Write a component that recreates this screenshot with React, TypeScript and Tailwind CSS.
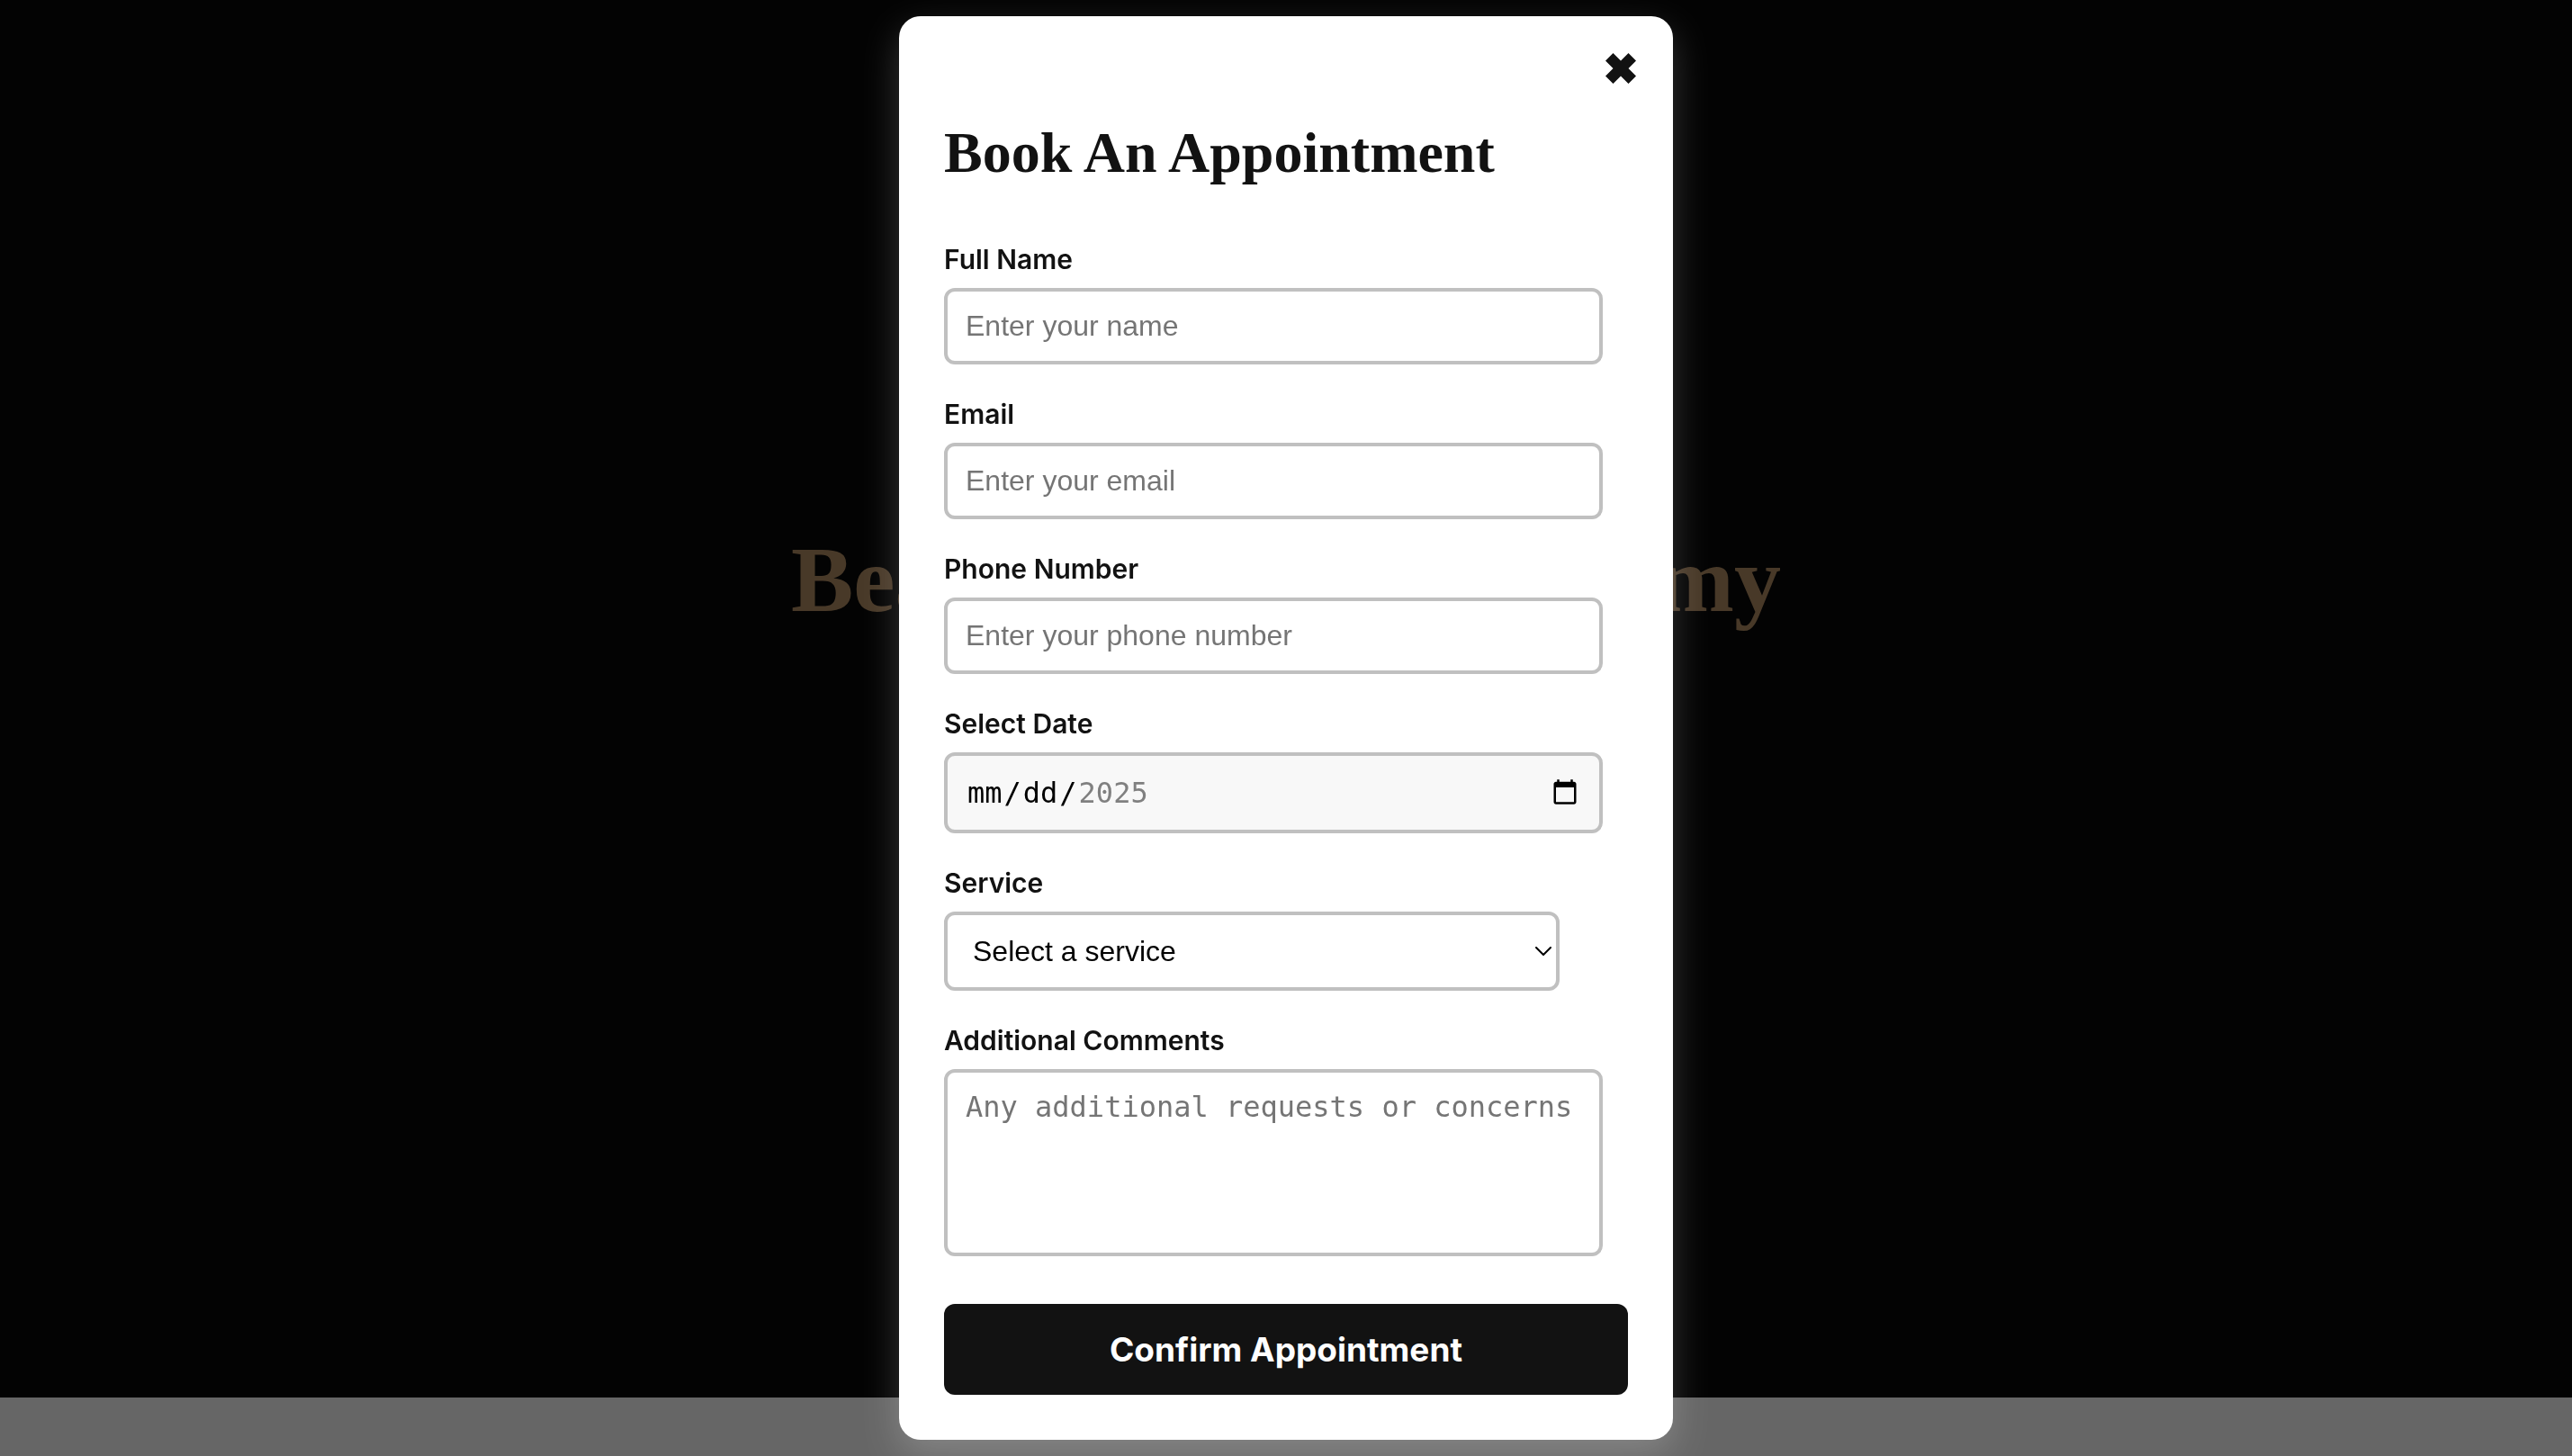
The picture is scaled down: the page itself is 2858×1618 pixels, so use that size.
import { useId, type ReactNode } from "react";

const control =
  "w-full max-w-[732px] rounded-[12px] border-4 border-[#c0c0c0] px-5 text-[32px] leading-[37px] outline-none placeholder:text-[#757575]";

function Field({ label, children }: { label: string; children: (id: string) => ReactNode }) {
  const id = useId();
  return (
    <div className="flex flex-col gap-3">
      <label
        htmlFor={id}
        className="font-['Inter',sans-serif] text-[30px] leading-[40px] font-semibold text-[#121212]"
      >
        {label}
      </label>
      {children(id)}
    </div>
  );
}

function BookingForm() {
  return (
    <form className="flex flex-col gap-[35px]" onSubmit={(event) => event.preventDefault()}>
      <Field label="Full Name">
        {(id) => (
          <input
            id={id}
            type="text"
            placeholder="Enter your name"
            className={`${control} bg-white py-5 font-['Liberation_Sans',sans-serif]`}
          />
        )}
      </Field>
      <Field label="Email">
        {(id) => (
          <input
            id={id}
            type="email"
            placeholder="Enter your email"
            className={`${control} bg-white py-5 font-['Liberation_Sans',sans-serif]`}
          />
        )}
      </Field>
      <Field label="Phone Number">
        {(id) => (
          <input
            id={id}
            type="tel"
            placeholder="Enter your phone number"
            className={`${control} bg-white py-5 font-['Liberation_Sans',sans-serif]`}
          />
        )}
      </Field>
      <Field label="Select Date">
        {(id) => (
          <input
            id={id}
            type="date"
            min="2025-01-01"
            max="2025-12-31"
            className={`${control} h-[90px] bg-[#f8f8f8] font-['DejaVu_Sans_Mono',monospace] text-black [&::-webkit-datetime-edit-day-field]:px-[2px] [&::-webkit-datetime-edit-month-field]:px-[2px] [&::-webkit-datetime-edit-year-field]:px-[2px]`}
          />
        )}
      </Field>
      <Field label="Service">
        {(id) => (
          <div className="relative w-full max-w-[684px]">
            <select
              id={id}
              defaultValue=""
              className={`${control} h-[88px] appearance-none bg-white pl-7 font-['Liberation_Sans',sans-serif] text-black`}
            >
              <option value="">Select a service</option>
            </select>
            <svg
              aria-hidden="true"
              viewBox="0 0 18 10"
              className="pointer-events-none absolute top-1/2 right-[9px] h-[10px] w-[18px] -translate-y-1/2"
              fill="none"
              stroke="#000"
              strokeWidth="2"
              strokeLinejoin="round"
              strokeLinecap="round"
            >
              <path d="M1 1l8 8 8-8" />
            </svg>
          </div>
        )}
      </Field>
      <Field label="Additional Comments">
        {(id) => (
          <textarea
            id={id}
            placeholder="Any additional requests or concerns"
            className={`${control} h-[208px] resize-none bg-white py-5 font-['DejaVu_Sans_Mono',monospace]`}
          />
        )}
      </Field>
      <button
        type="submit"
        className="mt-[18px] h-[101px] w-full rounded-[12px] bg-[#121212] font-['Inter',sans-serif] text-[37px] leading-[54px] font-bold text-white"
      >
        Confirm Appointment
      </button>
    </form>
  );
}

export default function App() {
  return (
    <div className="min-h-screen bg-white">
      <section className="flex h-[96vh] justify-center bg-[#080808] pt-[584px]">
        <h1 className="flex h-fit w-full max-w-[1100px] justify-between font-['Liberation_Serif',serif] text-[104px] leading-[120px] font-bold text-[#b48e64]">
          <span>Beauty</span>
          <span>Academy</span>
        </h1>
      </section>

      <div className="fixed inset-0 flex items-center justify-center bg-black/60">
        <div
          role="dialog"
          aria-modal="true"
          aria-labelledby="booking-title"
          className="relative w-full max-w-[860px] rounded-[24px] bg-white px-[50px] pt-[112px] pb-[50px] shadow-[0_16px_40px_rgba(255,255,255,0.2)]"
        >
          <button
            type="button"
            aria-label="Close"
            className="absolute top-8 right-8 flex size-[52px] items-center justify-center"
          >
            <svg aria-hidden="true" viewBox="0 0 34 34" className="size-[34px]" fill="#121212">
              <path d="M8.500 0L17 8.500 25.500 0 34 8.500 25.500 17 34 25.500 25.500 34 17 25.500 8.500 34 0 25.500 8.500 17 0 8.500z" />
            </svg>
          </button>
          <h2
            id="booking-title"
            className="mb-[58px] font-['Liberation_Serif',serif] text-[64px] leading-[80px] font-bold text-[#121212]"
          >
            Book An Appointment
          </h2>
          <BookingForm />
        </div>
      </div>
    </div>
  );
}
